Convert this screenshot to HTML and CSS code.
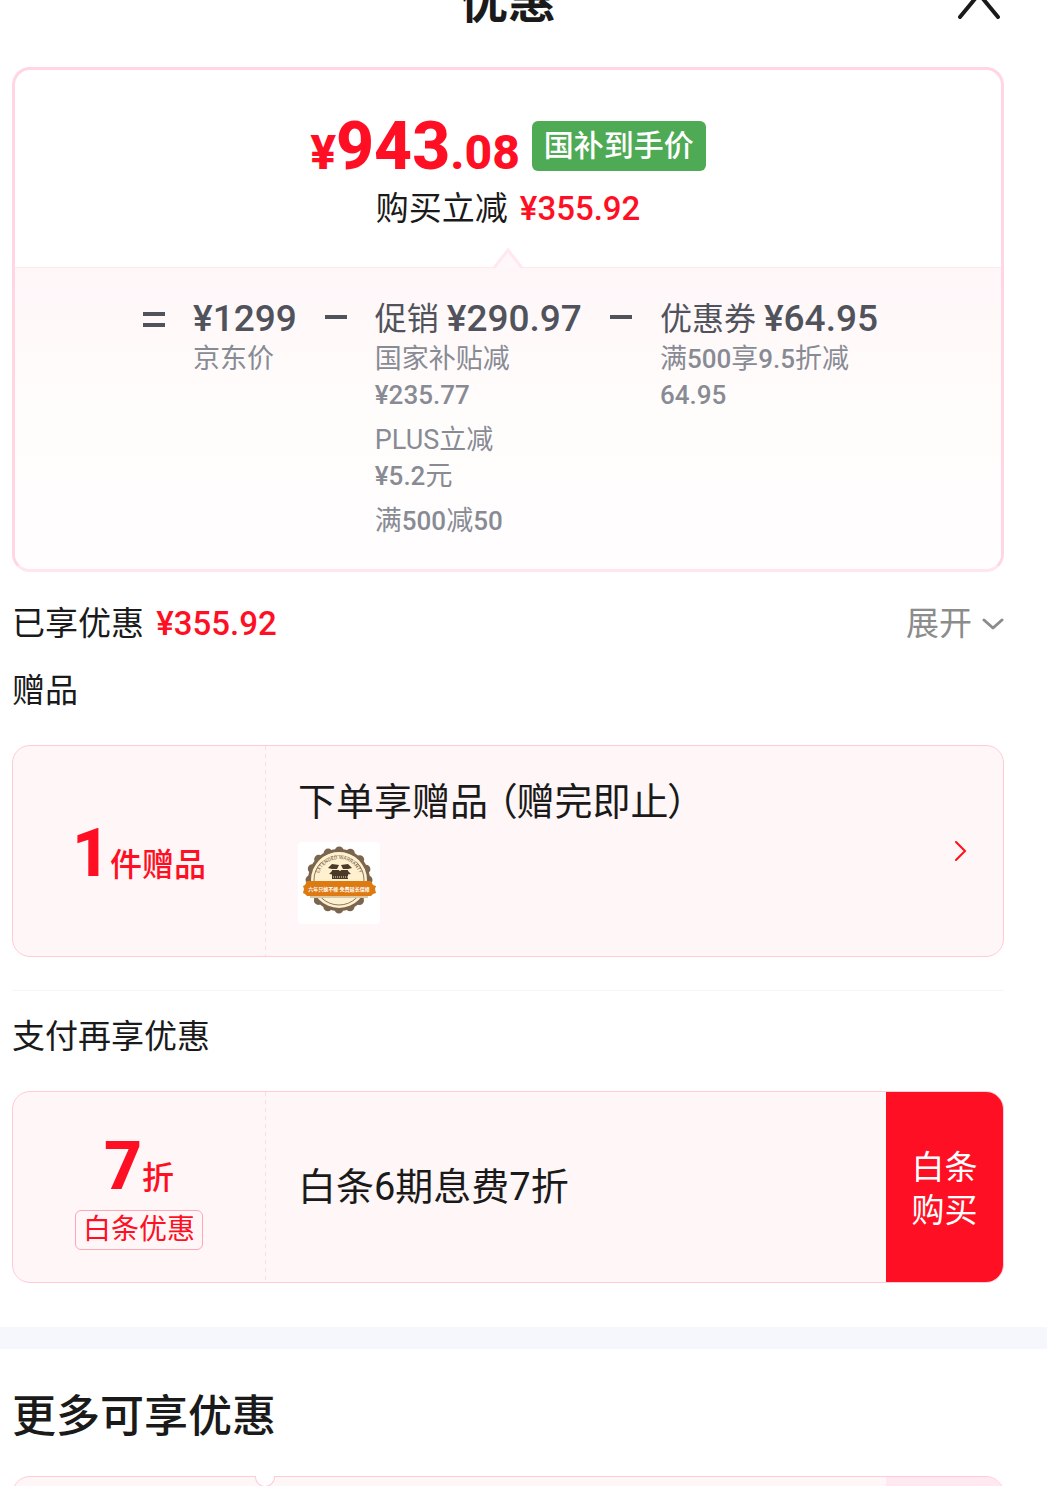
FILE: index.html
```html
<!DOCTYPE html>
<html lang="zh-CN">
<head>
    <meta charset="UTF-8">
    <meta name="viewport" content="width=device-width, initial-scale=1.0">
    <title>优惠</title>
    <link rel="stylesheet" href="styles.css">
</head>
<body>
    <header class="header">
        <h1 class="header-title">优惠</h1>
        <button class="close" type="button" aria-label="关闭">
            <svg width="44" height="44" viewBox="0 0 44 44" fill="none" stroke="#1a1a1a" stroke-width="4" stroke-linecap="round">
                <path d="M3 -5L41 41M41 -5L3 41"/>
            </svg>
        </button>
    </header>

    <main>
        <section class="price-card">
            <div class="price-top">
                <div class="price-row">
                    <div class="price"><span class="price-small">¥</span>943<span class="price-small">.08</span></div>
                    <span class="badge">国补到手价</span>
                </div>
                <p class="saving">购买立减 <span class="amount">¥355.92</span></p>
                <svg class="arrow" width="30" height="21" viewBox="0 0 30 21">
                    <path d="M0 21L15 2L30 21Z" fill="#fff7f9"/>
                    <path d="M1 20L15 2L29 20" fill="none" stroke="#ffe8ef" stroke-width="3"/>
                </svg>
            </div>
            <div class="formula">
                <svg class="sign" width="22" height="44" viewBox="0 0 22 44" fill="#50535b">
                    <path d="M0 15h22v4H0zM0 26h22v4H0z"/>
                </svg>
                <div class="item">
                    <p class="item-head"><span class="item-price">¥1299</span></p>
                    <p>京东价</p>
                </div>
                <svg class="sign" width="22" height="44" viewBox="0 0 22 44" fill="#50535b">
                    <path d="M0 18h22v4H0z"/>
                </svg>
                <div class="item">
                    <p class="item-head">促销<span class="item-price">¥290.97</span></p>
                    <p>国家补贴减<br><span class="num">¥235.77</span></p>
                    <p>PLUS立减<br><span class="num">¥5.2</span>元</p>
                    <p>满<span class="num">500</span>减<span class="num">50</span></p>
                </div>
                <svg class="sign" width="22" height="44" viewBox="0 0 22 44" fill="#50535b">
                    <path d="M0 18h22v4H0z"/>
                </svg>
                <div class="item">
                    <p class="item-head">优惠券<span class="item-price">¥64.95</span></p>
                    <p>满<span class="num">500</span>享<span class="num">9.5</span>折减<br><span class="num">64.95</span></p>
                </div>
            </div>
        </section>

        <div class="enjoyed">
            <h2 class="section-title">已享优惠 <span class="amount">¥355.92</span></h2>
            <button class="expand" type="button">展开
                <svg width="22" height="14" viewBox="0 0 22 14" fill="none" stroke="#8c8c8c" stroke-width="3" stroke-linecap="round" stroke-linejoin="round">
                    <path d="M2 3L11 11L20 3"/>
                </svg>
            </button>
        </div>

        <h2 class="section-title">赠品</h2>
        <section class="card gift">
            <div class="card-left">
                <div class="big"><strong>1</strong>件赠品</div>
            </div>
            <div class="card-line"></div>
            <div class="card-main">
                <h3 class="card-title">下单享赠品 （赠完即止）</h3>
                <svg class="thumb" width="82" height="82" viewBox="0 0 82 82">
                    <circle cx="41" cy="38" r="31" fill="#7b654f"/>
                    <circle cx="41" cy="38" r="29" fill="none" stroke="#7b654f" stroke-width="9" stroke-linecap="round" stroke-dasharray="0 11.39"/>
                    <circle cx="41" cy="38" r="28" fill="#fff0cf"/>
                    <path id="arc" d="M20 38a21 21 0 0 1 42 0" fill="none"/>
                    <circle cx="41" cy="38" r="25" fill="none" stroke="#8a775c" stroke-width="1"/>
                    <path d="M23 19A26 26 0 0 1 59 19" fill="none" stroke="#fff0cf" stroke-width="3"/>
                    <text font-size="5" fill="#6b553c" text-anchor="middle"><textPath href="#arc" startOffset="50%">EXTENDED WARRANTY</textPath></text>
                    <path d="M34 28h16v9H34z" fill="#4a3a28"/>
                    <path d="M34 27l-4-1 4-4 7 1-2 4zM50 27l4-1-4-4-7 1 2 4z" fill="#4a3a28"/>
                    <path d="M34 29l-3 3 7 1 2-3zM50 29l3 3-7 1-2-3z" fill="#4a3a28"/>
                    <path d="M35 35h15" fill="none" stroke="#fff0cf" stroke-dasharray="1 1"/>
                    <circle cx="42" cy="28" r="1" fill="#fff0cf"/>
                    <path d="M12 54h58v2H12z" fill="#d8c8a4"/>
                    <path d="M9 39h64l2 4 3 1-1 3 1 4-3 1-2 2H9l-2-2-2-1 1-4-1-3 2-1z" fill="#dd7a12"/>
                    <text class="ribbon" x="41" y="49" text-anchor="middle">六年只换不修·免费延长保修</text>
                </svg>
            </div>
            <button class="more" type="button" aria-label="查看赠品">
                <svg width="12" height="22" viewBox="0 0 12 22" fill="none" stroke="#ff0f16" stroke-width="2" stroke-linecap="round">
                    <path d="M1 2L10 11L1 20"/>
                </svg>
            </button>
        </section>

        <hr class="rule">

        <h2 class="section-title">支付再享优惠</h2>
        <section class="card pay">
            <div class="card-left">
                <div class="big"><strong>7</strong>折</div>
                <span class="tag">白条优惠</span>
            </div>
            <div class="card-line"></div>
            <div class="card-main">
                <h3 class="card-title">白条6期息费7折</h3>
            </div>
            <button class="buy" type="button">白条<br>购买</button>
        </section>
    </main>

    <div class="band"></div>

    <section class="others">
        <h2 class="others-title">更多可享优惠</h2>
        <div class="peek">
            <div class="coupon">
                <div class="notch"></div>
                <div class="coupon-end"></div>
            </div>
        </div>
    </section>
</body>
</html>
```
FILE: styles.css
```css
* {
    box-sizing: border-box;
}
body {
    margin: 0;
    background-color: #fff;
    color: #1a1a1a;
    font-family: Roboto, "Noto Sans CJK SC", sans-serif;
    font-size: 33px;
    line-height: 44px;
}
h1, h2, h3, p {
    margin: 0;
    font-weight: 400;
}
button {
    padding: 0;
    border: 0;
    background: none;
    font: inherit;
    color: inherit;
    cursor: pointer;
}
svg {
    display: block;
    flex: none;
}
main, .others, .header {
    padding: 0 43px 0 12px;
}
.header {
    display: grid;
    grid-template-columns: 1fr auto 1fr;
    height: 91px;
    margin-top: -24px;
}
.header-title {
    grid-column: 2;
    font-size: 48px;
    line-height: 52px;
    font-weight: 700;
}
.close {
    justify-self: end;
    align-self: start;
    padding-right: 3px;
}

/* price */
.price-card {
    border: 3px solid #ffd6e2;
    border-bottom-color: #ffe6ed;
    border-radius: 18px;
}
.price-top {
    position: relative;
    display: flex;
    flex-direction: column;
    align-items: center;
    height: 198px;
    padding-top: 45px;
    border-bottom: 1px solid #ffe8ef;
}
.price-row {
    display: flex;
    align-items: center;
    gap: 12px;
    height: 62px;
}
.price {
    padding-top: 8px;
    color: #ff0f23;
    font-size: 66px;
    line-height: 64px;
    font-weight: 800;
}
.price-small {
    font-size: 48px;
}
.badge {
    padding: 0 12px;
    border-radius: 6px;
    background-color: #4faa55;
    color: #fff;
    font-size: 30px;
    line-height: 50px;
    font-weight: 500;
}
.saving {
    margin-top: 10px;
}
.amount {
    margin-left: 4px;
    color: #ff0f23;
    font-size: 33px;
    font-weight: 500;
}
.arrow {
    position: absolute;
    left: 50%;
    bottom: -2px;
    transform: translateX(-50%);
}
.formula {
    display: flex;
    justify-content: center;
    gap: 28px;
    padding: 29px 0 30px 5px;
    border-radius: 0 0 15px 15px;
    background: linear-gradient(#fff6f8, #fffdfc 50%, #fffdfd);
}
.item {
    display: flex;
    flex-direction: column;
    gap: 9px;
    color: #888b94;
    font-size: 27px;
    line-height: 36px;
}
.item-head {
    display: flex;
    gap: 8px;
    margin-bottom: -9px;
    color: #50535b;
    font-size: 32px;
    line-height: 44px;
}
.item-price {
    font-size: 37px;
    font-weight: 500;
}
.num {
    font-size: 26px;
    font-weight: 500;
}

/* sections */
.section-title {
    font-size: 33px;
}
.enjoyed {
    display: flex;
    justify-content: space-between;
    align-items: center;
    margin: 30px 0 23px;
}
.expand {
    display: flex;
    align-items: center;
    gap: 10px;
    color: #8c8c8c;
}
.card {
    display: flex;
    margin-top: 32px;
    border: 1px solid #ffcbd6;
    border-radius: 18px;
    background-color: #fff6f7;
    overflow: hidden;
}
.gift {
    min-height: 212px;
}
.pay {
    min-height: 192px;
}
.card-left {
    display: flex;
    flex-direction: column;
    align-items: center;
    justify-content: center;
    flex: none;
    width: 252px;
    padding-top: 10px;
}
.gift .card-left {
    padding-top: 16px;
}
.card-line {
    flex: none;
    width: 1px;
    background: repeating-linear-gradient(#ffdbe3 0 4px, transparent 4px 8px);
}
.card-main {
    display: flex;
    flex-direction: column;
    justify-content: center;
    flex: 1;
    gap: 16px;
    padding-left: 32px;
}
.card-title {
    font-size: 38px;
    line-height: 48px;
    font-feature-settings: "palt";
}
.thumb {
    border-radius: 4px;
    background-color: #fff;
}
.ribbon {
    fill: #fff;
    font-size: 5px;
    font-weight: 700;
}
.big {
    color: #ff0f23;
    font-size: 32px;
    font-weight: 500;
    line-height: 64px;
}
.big strong {
    font-size: 66px;
    font-weight: 800;
}
.tag {
    padding: 0 7px;
    border: 1px solid #ffa6b7;
    border-radius: 6px;
    color: #ff0f23;
    font-size: 28px;
    line-height: 38px;
}
.more {
    padding: 0 36px;
}
.buy {
    flex: none;
    width: 117px;
    padding-top: 4px;
    background-color: #ff0f23;
    color: #fff;
    line-height: 43px;
}
.rule {
    height: 1px;
    margin: 33px 0 24px;
    border: 0;
    background-color: #f5f5fb;
}
.band {
    height: 22px;
    margin-top: 44px;
    background-color: #f6f7fc;
}
.others-title {
    padding: 38px 0 29px;
    font-size: 44px;
    line-height: 60px;
    font-weight: 500;
}

/* only the top edge of the next coupon shows */
.peek {
    height: 10px;
    overflow: hidden;
}
.coupon {
    position: relative;
    display: flex;
    justify-content: flex-end;
    height: 60px;
    border: 1px solid #ffcbd6;
    border-radius: 18px;
    background-color: #fff6f7;
}
.coupon-end {
    width: 117px;
    border-radius: 0 17px 17px 0;
    background-color: #ffe8ef;
}
.notch {
    position: absolute;
    left: 242px;
    top: -1px;
    width: 20px;
    height: 11px;
    border: 1px solid #ffcbd6;
    border-top: 0;
    border-radius: 0 0 10px 10px;
    background-color: #fff;
}
```
